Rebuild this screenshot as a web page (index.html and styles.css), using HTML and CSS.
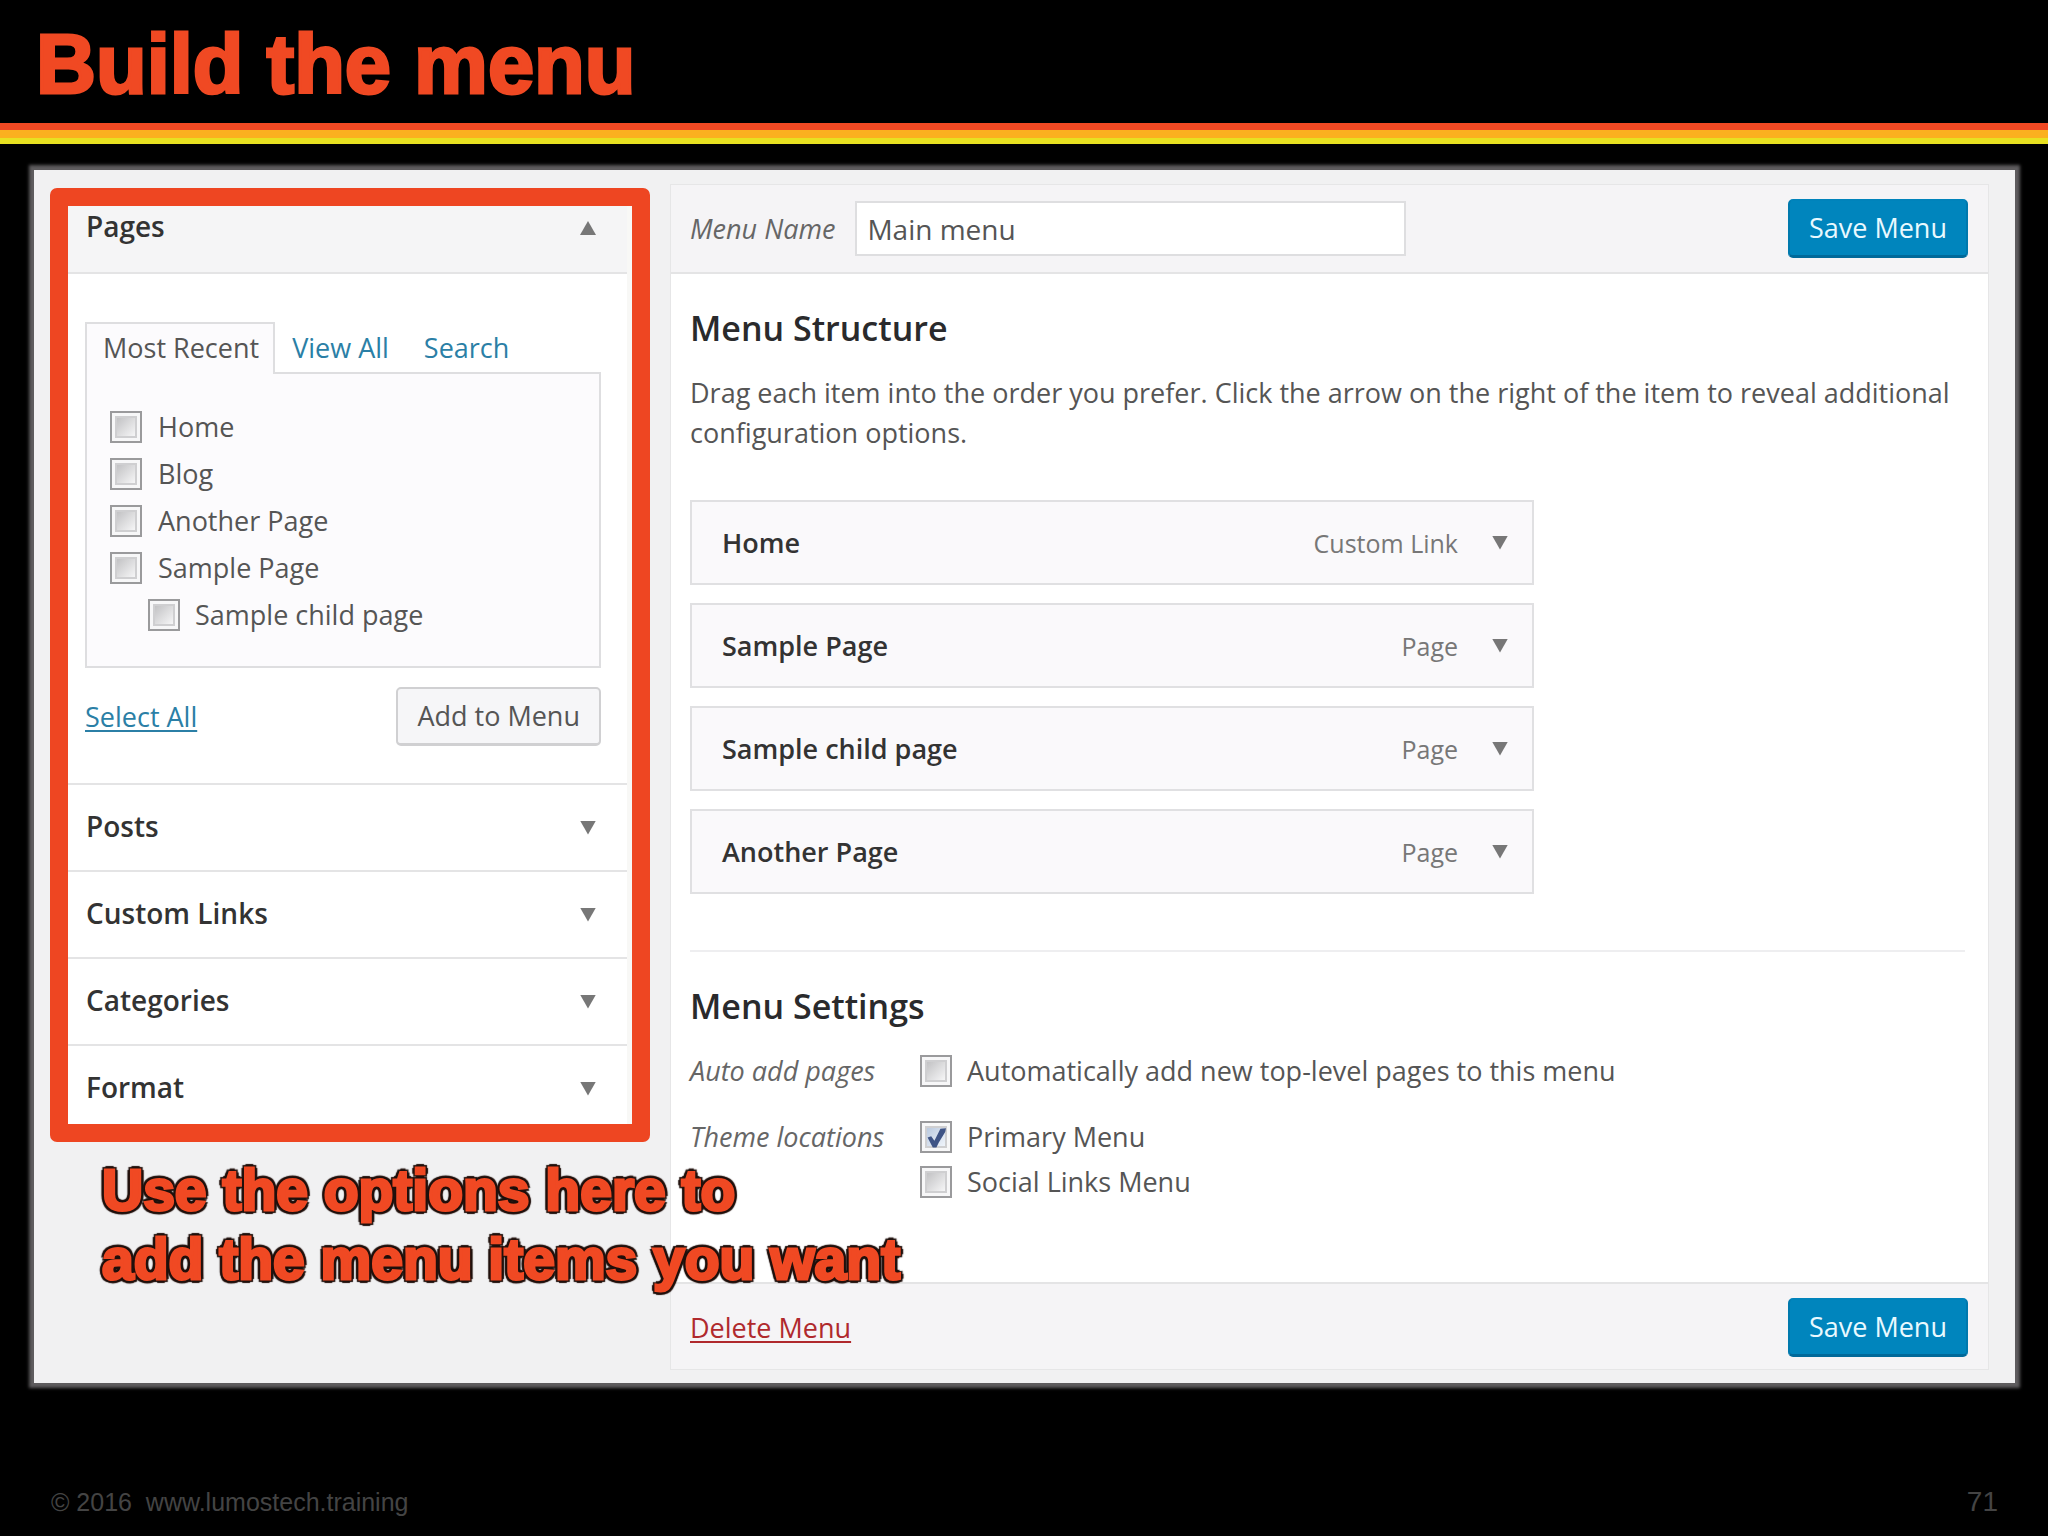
FILE: index.html
```html
<!DOCTYPE html>
<html lang="en">
<head>
<meta charset="utf-8">
<meta name="viewport" content="width=device-width, initial-scale=1">
<title>Build the menu</title>
<link rel="stylesheet" href="styles.css">
</head>
<body>
<header class="slide-header">
  <h1 class="slide-title">Build the menu</h1>
</header>
<div class="stripes"></div>

<main class="screen">
  <aside class="sources">
    <div class="sources-clip">
      <button type="button" class="section-toggle section-open">Pages<span class="arrow arrow-up"></span></button>
      <div class="pages-body">
        <nav class="tabs">
          <a class="tab tab-active" href="#recent">Most Recent</a>
          <a class="tab" href="#all">View All</a>
          <a class="tab" href="#search">Search</a>
        </nav>
        <div class="tab-panel" id="recent">
          <label class="check"><input type="checkbox">Home</label>
          <label class="check"><input type="checkbox">Blog</label>
          <label class="check"><input type="checkbox">Another Page</label>
          <label class="check"><input type="checkbox">Sample Page</label>
          <label class="check check-child"><input type="checkbox">Sample child page</label>
        </div>
        <div class="pages-actions">
          <a class="link" href="#select-all">Select All</a>
          <button type="button" class="button">Add to Menu</button>
        </div>
      </div>
      <button type="button" class="section-toggle">Posts<span class="arrow"></span></button>
      <button type="button" class="section-toggle">Custom Links<span class="arrow"></span></button>
      <button type="button" class="section-toggle">Categories<span class="arrow"></span></button>
      <button type="button" class="section-toggle section-last">Format<span class="arrow"></span></button>
    </div>
    <p class="callout">Use the options here to<br>add the menu items you want</p>
  </aside>

  <form class="editor">
    <div class="editor-bar editor-top">
      <label class="name-label" for="menu-name">Menu Name</label>
      <input class="name-input" id="menu-name" type="text" value="Main menu">
      <button type="button" class="button button-primary">Save Menu</button>
    </div>
    <div class="editor-body">
      <h2 class="heading">Menu Structure</h2>
      <p class="intro">Drag each item into the order you prefer. Click the arrow on the right of the item to reveal additional configuration options.</p>
      <ul class="items">
        <li class="item"><span class="item-title">Home</span><span class="item-type">Custom Link</span><span class="arrow"></span></li>
        <li class="item"><span class="item-title">Sample Page</span><span class="item-type">Page</span><span class="arrow"></span></li>
        <li class="item"><span class="item-title">Sample child page</span><span class="item-type">Page</span><span class="arrow"></span></li>
        <li class="item"><span class="item-title">Another Page</span><span class="item-type">Page</span><span class="arrow"></span></li>
      </ul>
      <hr class="rule">
      <h2 class="heading">Menu Settings</h2>
      <div class="settings">
        <span class="setting-name">Auto add pages</span>
        <div class="setting-options">
          <label class="option"><input type="checkbox">Automatically add new top-level pages to this menu</label>
        </div>
        <span class="setting-name">Theme locations</span>
        <div class="setting-options">
          <label class="option"><input type="checkbox" checked>Primary Menu</label>
          <label class="option"><input type="checkbox">Social Links Menu</label>
        </div>
      </div>
    </div>
    <div class="editor-bar editor-bottom">
      <a class="link link-delete" href="#delete">Delete Menu</a>
      <button type="button" class="button button-primary">Save Menu</button>
    </div>
  </form>
</main>

<footer class="slide-footer">
  <span>© 2016 &nbsp;www.lumostech.training</span>
  <span class="page-number">71</span>
</footer>
</body>
</html>
```
FILE: styles.css
```css
* {
  box-sizing: border-box;
}

body {
  margin: 0;
  min-height: 100vh;
  display: flex;
  flex-direction: column;
  background: #000;
  color: #555;
  font: 27px/40px "Open Sans", "Noto Sans", sans-serif;
}

h1, h2, p, ul {
  margin: 0;
  padding: 0;
}

button, input {
  font: inherit;
  color: inherit;
  margin: 0;
}

.slide-header {
  padding: 7px 36px 0;
}

.slide-title {
  color: #f04923;
  font: bold 83px/116px "Liberation Sans", Arial, sans-serif;
  -webkit-text-stroke: 3px #f04923;
}

.stripes {
  height: 21px;
  background: linear-gradient(#f04923 0 7px, #fbb01f 7px 15px, #e8e121 15px);
}

/* Admin screen */

.screen {
  display: flex;
  align-items: flex-start;
  gap: 20px;
  margin: 26px 33px 0 34px;
  padding: 14px 26px 13px 16px;
  background: #f1f1f2;
  box-shadow: 0 0 3px 5px #5e5c5e;
}

.sources {
  position: relative;
  flex: 0 0 600px;
  margin-top: 4px;
  border: 18px solid #ee4622;
  border-radius: 7px;
  background: #fff;
}

.sources-clip {
  border-right: 5px solid #f8f8f6;
}

.section-toggle {
  display: flex;
  align-items: center;
  justify-content: space-between;
  width: 100%;
  height: 87px;
  padding: 0 31px 4px 18px;
  border: 0;
  border-top: 2px solid #e4e4e5;
  background: #fff;
  color: #333;
  font-size: 28px;
  font-weight: 600;
  text-align: left;
}

.section-toggle .arrow {
  margin-top: 4px;
}

.section-open {
  height: 68px;
  padding-bottom: 26px;
  border-top: 0;
  border-bottom: 2px solid #e4e4e5;
  background: #f5f5f6;
}

.section-last {
  height: 80px;
  padding-top: 3px;
  padding-bottom: 0;
}

.arrow {
  flex: none;
  width: 16px;
  height: 14px;
  background: #777;
  clip-path: polygon(0 0, 100% 0, 50% 100%);
}

.arrow-up {
  clip-path: polygon(0 100%, 100% 100%, 50% 0);
}

.pages-body {
  padding: 48px 26px 37px 17px;
}

.tabs {
  display: flex;
}

.tab {
  height: 50px;
  padding: 6px 18px 0 17px;
  color: #2b7fa6;
  text-decoration: none;
}

.tab-active {
  position: relative;
  z-index: 1;
  height: 52px;
  margin-bottom: -2px;
  padding: 4px 14px 0 16px;
  border: 2px solid #dedee0;
  border-bottom: 0;
  background: #fcfbfd;
  color: #555;
}

.tab-panel {
  padding: 29px 23px 28px;
  border: 2px solid #dedee0;
  background: #fcfbfd;
}

.check {
  display: flex;
  align-items: center;
  gap: 16px;
  height: 47px;
}

.check-child {
  padding-left: 38px;
  gap: 15px;
}

input[type="checkbox"] {
  appearance: none;
  flex: none;
  width: 32px;
  height: 32px;
  border: 2px solid #9a9a9c;
  background: linear-gradient(135deg, #c4c4c6 20%, #f4f4f5 80%);
  box-shadow: inset 0 0 0 3px #f7f7f8, inset 0 0 0 5px #cfcfd1;
}

input[type="checkbox"]:checked {
  background: linear-gradient(135deg, #bccbe0 20%, #eef3fa 80%);
}

input[type="checkbox"]:checked::after {
  content: "";
  display: block;
  width: 20px;
  height: 21px;
  margin: 4px;
  background: #3f5486;
  clip-path: polygon(8% 50%, 26% 44%, 42% 66%, 72% 8%, 100% 6%, 96% 24%, 64% 74%, 52% 98%, 34% 98%);
}

.pages-actions {
  display: flex;
  align-items: center;
  justify-content: space-between;
  margin-top: 19px;
}

.link {
  color: #2b7fa6;
  text-decoration-thickness: 2px;
  text-underline-offset: 3px;
}

.link-delete {
  color: #b0292d;
}

.button {
  height: 59px;
  padding: 0 19px;
  border: 2px solid #d0d0d2;
  border-bottom-width: 3px;
  border-radius: 5px;
  background: #f6f6f8;
}

.button-primary {
  border-color: #0083bb #0079ad #00699a;
  background: #0085bd;
  color: #e9f9ff;
}

/* Note laid over the lower left of the screen */

.callout {
  position: absolute;
  top: 100%;
  left: 34px;
  margin-top: 32px;
  color: #f04923;
  font: bold 57px/69px "Liberation Sans", Arial, sans-serif;
  white-space: nowrap;
  -webkit-text-stroke: 3px #f04923;
  text-shadow: 4px 0 1px #20100c, -4px 0 1px #20100c, 0 4px 1px #20100c, 0 -4px 1px #20100c,
    3px 3px 1px #20100c, -3px 3px 1px #20100c, 3px -3px 1px #20100c, -3px -3px 1px #20100c;
}

/* Menu editor */

.editor {
  flex: 1;
  min-width: 0;
  border: 1px solid #e6e6e7;
  background: #fff;
}

.editor-bar {
  display: flex;
  align-items: center;
  padding: 14px 20px 14px 19px;
  background: #f5f4f6;
}

.editor-top {
  border-bottom: 2px solid #e4e4e5;
}

.editor-bottom {
  justify-content: space-between;
  padding-bottom: 12px;
  border-top: 2px solid #e4e4e5;
}

.name-label, .setting-name {
  color: #666;
  font-style: italic;
}

.name-input {
  flex: 0 1 551px;
  height: 55px;
  min-width: 0;
  margin: 0 auto 0 20px;
  padding: 0 10px;
  border: 2px solid #dedee0;
  background: #fff;
  font-size: 28px;
}

.editor-body {
  padding: 31px 23px 80px 19px;
}

.heading {
  color: #2a2a2c;
  font-size: 34px;
  font-weight: 600;
  line-height: 46px;
}

.intro {
  margin-top: 22px;
}

.items {
  display: grid;
  gap: 18px;
  max-width: 844px;
  margin-top: 47px;
  list-style: none;
}

.item {
  display: flex;
  align-items: center;
  height: 85px;
  padding: 0 24px 0 30px;
  border: 2px solid #e0e0e2;
  background: #faf9fb;
}

.item-title {
  flex: 1;
  color: #333;
  font-weight: 600;
}

.item-type {
  margin-right: 34px;
  color: #777;
  font-size: 25px;
}

.rule {
  margin: 56px 0 31px;
  border: 0;
  border-top: 2px solid #eeeef0;
}

.settings {
  display: grid;
  grid-template-columns: 230px 1fr;
  row-gap: 26px;
  margin-top: 22px;
}

.setting-options {
  display: grid;
  gap: 5px;
}

.option {
  display: flex;
  align-items: center;
  gap: 15px;
}

.slide-footer {
  display: flex;
  justify-content: space-between;
  margin-top: auto;
  padding: 24px 50px 18px 51px;
  color: #444;
  font: 25px/32px "Liberation Sans", Arial, sans-serif;
}

.page-number {
  font-size: 28px;
}
```
